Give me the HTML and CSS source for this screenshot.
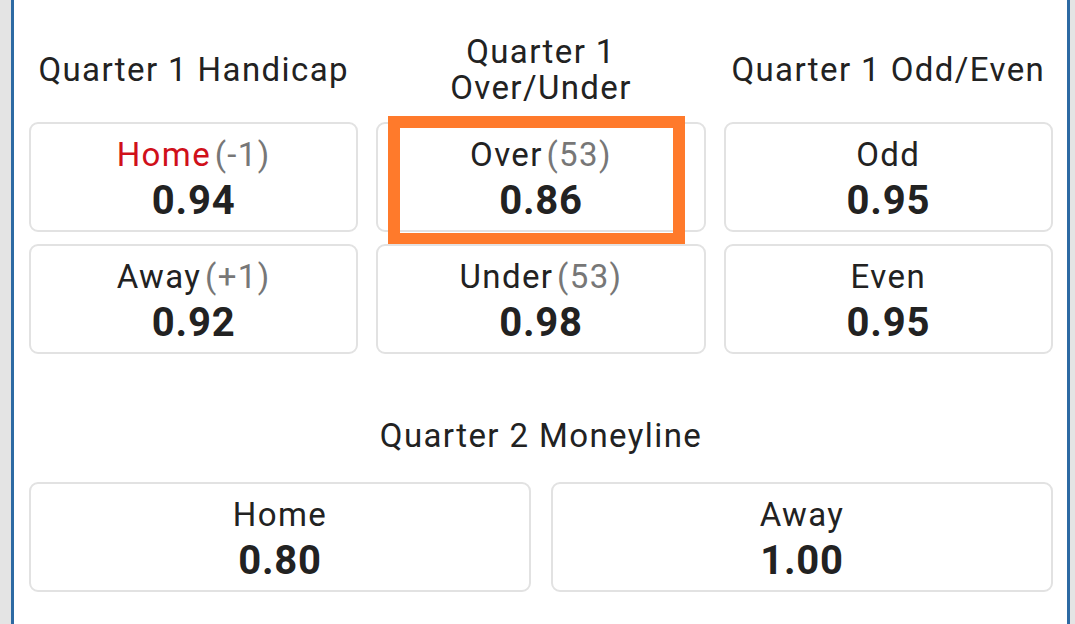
FILE: index.html
```html
<!DOCTYPE html>
<html>
<head>
<meta charset="utf-8">
<link rel="stylesheet" href="styles.css">
</head>
<body>
<div class="frame">
  <section class="market-grid three">
    <div class="title">Quarter 1 Handicap</div>
    <div class="title">Quarter 1<br>Over/Under</div>
    <div class="title">Quarter 1 Odd/Even</div>

    <div class="card"><div class="label"><span class="fav">Home</span> <span class="line">(-1)</span></div><div class="odds">0.94</div></div>
    <div class="card highlighted"><div class="label">Over <span class="line">(53)</span></div><div class="odds">0.86</div><div class="marker"></div></div>
    <div class="card"><div class="label">Odd</div><div class="odds">0.95</div></div>

    <div class="card"><div class="label">Away <span class="line">(+1)</span></div><div class="odds">0.92</div></div>
    <div class="card"><div class="label">Under <span class="line">(53)</span></div><div class="odds">0.98</div></div>
    <div class="card"><div class="label">Even</div><div class="odds">0.95</div></div>
  </section>

  <section class="market-block">
    <div class="title single">Quarter 2 Moneyline</div>
    <div class="market-grid two">
      <div class="card"><div class="label">Home</div><div class="odds">0.80</div></div>
      <div class="card"><div class="label">Away</div><div class="odds">1.00</div></div>
    </div>
  </section>
</div>
</body>
</html>
```

FILE: styles.css
```css
* { box-sizing: border-box; }
html, body { margin: 0; padding: 0; }
body {
  background: #e4e4e4;
  font-family: Roboto, "Noto Sans", sans-serif;
  color: #222;
  height: 624px;
  overflow: hidden;
}
.frame {
  margin-left: 11px;
  width: 1059px;
  height: 624px;
  background: #fff;
  border-left: 3px solid #2d6aa3;
  border-right: 3px solid #2d6aa3;
  padding: 34px 14px 0 15px;
}
.market-grid {
  display: grid;
  column-gap: 18px;
  row-gap: 12px;
}
.market-grid.three {
  grid-template-columns: repeat(3, 1fr);
}
.market-grid.two {
  grid-template-columns: repeat(2, 1fr);
  column-gap: 20px;
}
.title {
  font-size: 33px;
  letter-spacing: 1.4px;
  line-height: 36px;
  text-align: center;
  align-self: center;
  margin-bottom: 4px;
}
.title.single {
  margin: 0 0 28px;
}
.market-block {
  margin-top: 64px;
}
.card {
  position: relative;
  height: 110px;
  border: 2px solid #e2e2e2;
  border-radius: 9px;
  text-align: center;
  padding-top: 12px;
}
.label {
  font-size: 33px;
  letter-spacing: 1.4px;
  word-spacing: -6px;
  line-height: 38px;
}
.fav { color: #d0101a; }
.line { color: #777; }
.odds {
  margin-top: 3px;
  font-size: 40px;
  letter-spacing: 0.8px;
  font-weight: 700;
  line-height: 48px;
}
.marker {
  position: absolute;
  left: 10px;
  top: -8px;
  width: 297px;
  height: 129px;
  border: 12px solid #ff7a2b;
}
```
